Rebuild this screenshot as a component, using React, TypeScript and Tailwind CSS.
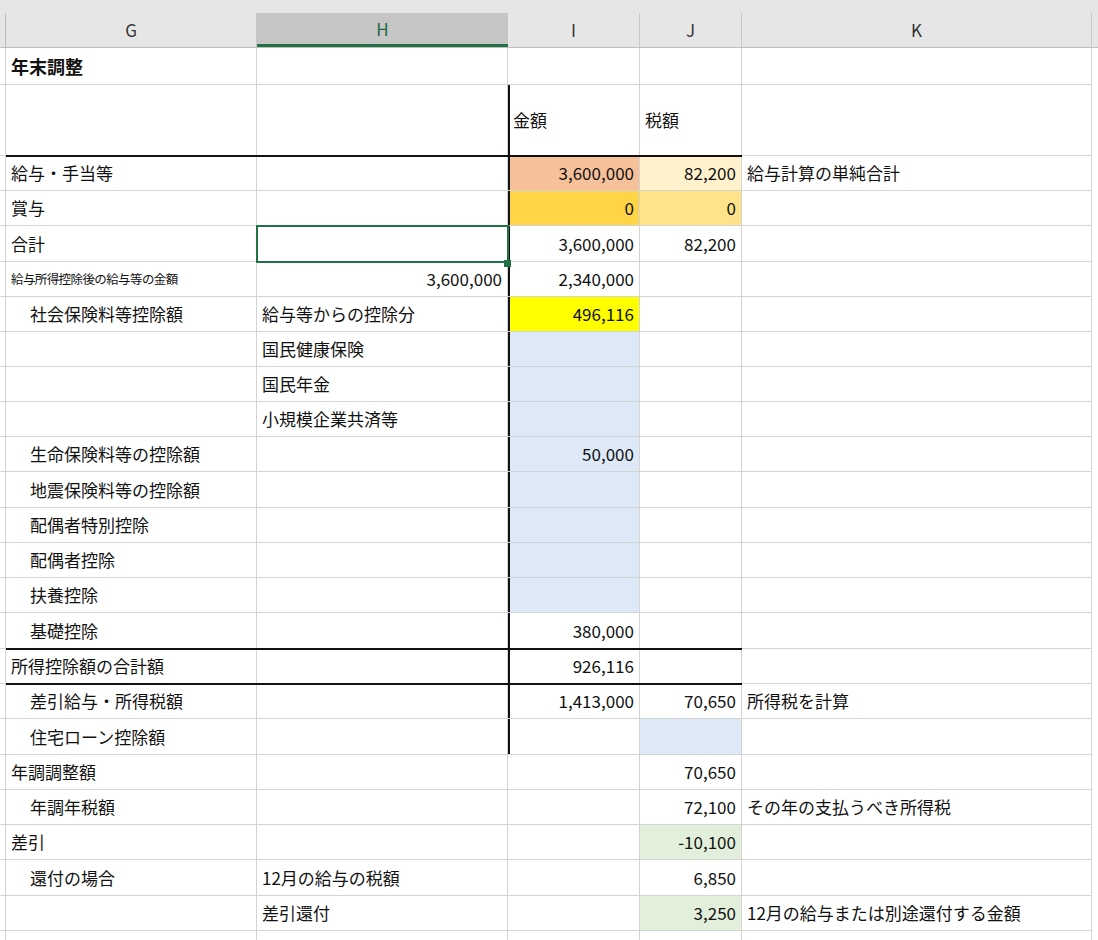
const F = { fontFamily: '"Noto Sans CJK JP", "Liberation Sans", sans-serif' };

type Cell = { t?: string; bg?: string; right?: boolean; indent?: boolean; small?: boolean; bold?: boolean };
type Row = { h: number; g?: Cell; hh?: Cell; i?: Cell; j?: Cell; k?: Cell; thickTop?: boolean; iLeft?: boolean; sel?: boolean };

const blue = "bg-[#dde9f6]";
const rows: Row[] = [
  { h: 37, g: { t: "年末調整", bold: true } },
  { h: 71, i: { t: "金額" }, j: { t: "税額" }, iLeft: true },
  { h: 35, g: { t: "給与・手当等" }, i: { t: "3,600,000", right: true, bg: "bg-[#f6c09b]" }, j: { t: "82,200", right: true, bg: "bg-[#fff2cc]" }, k: { t: "給与計算の単純合計" }, thickTop: true, iLeft: true },
  { h: 35, g: { t: "賞与" }, i: { t: "0", right: true, bg: "bg-[#ffd447]" }, j: { t: "0", right: true, bg: "bg-[#ffe38a]" }, iLeft: true },
  { h: 36, g: { t: "合計" }, i: { t: "3,600,000", right: true }, j: { t: "82,200", right: true }, iLeft: true, sel: true },
  { h: 35, g: { t: "給与所得控除後の給与等の金額", small: true }, hh: { t: "3,600,000", right: true }, i: { t: "2,340,000", right: true }, iLeft: true },
  { h: 35, g: { t: "社会保険料等控除額", indent: true }, hh: { t: "給与等からの控除分" }, i: { t: "496,116", right: true, bg: "bg-[#ffff00]" }, iLeft: true },
  { h: 35, hh: { t: "国民健康保険" }, i: { bg: blue }, iLeft: true },
  { h: 35, hh: { t: "国民年金" }, i: { bg: blue }, iLeft: true },
  { h: 35, hh: { t: "小規模企業共済等" }, i: { bg: blue }, iLeft: true },
  { h: 35, g: { t: "生命保険料等の控除額", indent: true }, i: { t: "50,000", right: true, bg: blue }, iLeft: true },
  { h: 36, g: { t: "地震保険料等の控除額", indent: true }, i: { bg: blue }, iLeft: true },
  { h: 35, g: { t: "配偶者特別控除", indent: true }, i: { bg: blue }, iLeft: true },
  { h: 35, g: { t: "配偶者控除", indent: true }, i: { bg: blue }, iLeft: true },
  { h: 35, g: { t: "扶養控除", indent: true }, i: { bg: blue }, iLeft: true },
  { h: 36, g: { t: "基礎控除", indent: true }, i: { t: "380,000", right: true }, iLeft: true },
  { h: 35, g: { t: "所得控除額の合計額" }, i: { t: "926,116", right: true }, thickTop: true, iLeft: true },
  { h: 35, g: { t: "差引給与・所得税額", indent: true }, i: { t: "1,413,000", right: true }, j: { t: "70,650", right: true }, k: { t: "所得税を計算" }, thickTop: true, iLeft: true },
  { h: 36, g: { t: "住宅ローン控除額", indent: true }, j: { bg: blue }, iLeft: true },
  { h: 35, g: { t: "年調調整額" }, j: { t: "70,650", right: true } },
  { h: 35, g: { t: "年調年税額", indent: true }, j: { t: "72,100", right: true }, k: { t: "その年の支払うべき所得税" } },
  { h: 35, g: { t: "差引" }, j: { t: "-10,100", right: true, bg: "bg-[#e2efda]" } },
  { h: 36, g: { t: "還付の場合", indent: true }, hh: { t: "12月の給与の税額" }, j: { t: "6,850", right: true } },
  { h: 35, hh: { t: "差引還付" }, j: { t: "3,250", right: true, bg: "bg-[#e2efda]" }, k: { t: "12月の給与または別途還付する金額" } },
  { h: 35 },
];

function C({ c, w, extra = "" }: { c?: Cell; w: string; extra?: string }) {
  return (
    <div
      className={`${w} shrink-0 border-r border-b border-[#d4d4d4] flex items-center overflow-visible whitespace-nowrap px-[5px] ${c?.bg ?? ""} ${c?.right ? "justify-end" : ""} ${c?.indent ? "pl-[24px]" : ""} ${c?.small ? "text-[12.5px] tracking-[-0.6px] px-[3px]" : "text-[17px]"} ${c?.bold ? "font-bold text-[18px]" : ""} ${extra}`}
    >
      {c?.t}
    </div>
  );
}

export default function App() {
  return (
    <div className="w-[1098px] h-[940px] overflow-hidden bg-white text-[#111]" style={F}>
      <div className="h-[13px] bg-[#e6e6e6]" />
      <div className="flex h-[35px] bg-[#e6e6e6] text-[17px] text-[#333] border-b border-[#bdbdbd]">
        <div className="w-[6px] border-r border-[#bdbdbd]" />
        <div className="w-[251px] border-r border-[#c8c8c8] flex items-center justify-center">G</div>
        <div className="w-[251px] bg-[#c6c6c6] border-b-[3px] border-[#217346] text-[#1e6b3f] flex items-center justify-center">H</div>
        <div className="w-[132px] border-r border-[#c8c8c8] flex items-center justify-center">I</div>
        <div className="w-[102px] border-r border-[#c8c8c8] flex items-center justify-center">J</div>
        <div className="w-[350px] border-r border-[#c8c8c8] flex items-center justify-center">K</div>
      </div>
      {rows.map((r, idx) => (
        <div key={idx} className="relative flex" style={{ height: r.h }}>
          {r.thickTop && <div className="absolute left-[6px] w-[736px] top-[-1px] h-[2px] bg-[#111] z-10" />}
          <div className="w-[6px] shrink-0 border-r border-b border-[#d4d4d4]" />
          <C c={r.g} w="w-[251px]" />
          <C c={r.hh} w="w-[251px]" extra={r.sel ? "outline outline-2 -outline-offset-1 outline-[#217346] relative z-20" : ""} />
          <C c={r.i} w="w-[132px]" extra={r.iLeft ? "shadow-[inset_2px_0_0_#111]" : ""} />
          <C c={r.j} w="w-[102px]" />
          <C c={r.k} w="w-[350px]" />
          {r.sel && <div className="absolute left-[504px] bottom-[-5px] w-[7px] h-[7px] bg-[#217346] z-30" />}
        </div>
      ))}
    </div>
  );
}
